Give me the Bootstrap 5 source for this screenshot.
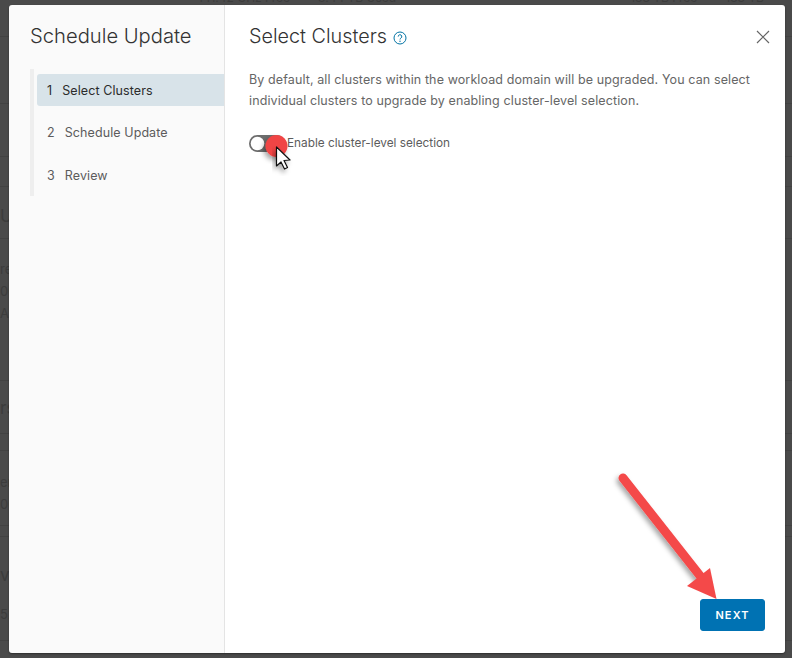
<!DOCTYPE html>
<html lang="en">
<head>
    <meta charset="UTF-8">
    <meta name="viewport" content="width=device-width, initial-scale=1.0">
    <title>Schedule Update</title>
    <link href="https://cdn.jsdelivr.net/npm/bootstrap@5.3.0/dist/css/bootstrap.min.css" rel="stylesheet">
    <style>
        html, body { height: 100%; }
        body { background: #4a4a4a; font-family: Inter, "Liberation Sans", sans-serif; overflow: hidden; }

        /* dimmed page behind the wizard */
        .back-page { height: 658px; color: #3c3c3c; font-size: 13px; line-height: 18px; overflow: hidden; }
        .back-top { height: 47px; margin-top: -11px; padding-left: 198px; gap: 28px; font-size: 12px; white-space: nowrap; }
        .back-top .far-one { margin-left: 206px; }
        .back-row { border-top: 1px solid #424242; display: flex; flex-direction: column; }
        .back-row span { white-space: nowrap; }
        .back-big { font-size: 17px; }

        /* wizard */
        .wiz-frame { position: absolute; top: 5px; left: 9px; width: 776px; height: 648px; border-radius: 3px; overflow: hidden; box-shadow: 0 1px 2px rgba(0,0,0,.4); }
        .wiz-side { width: 216px; flex: none; background: #fafafa; border-right: 1px solid #e4e4e4; padding: 20px 0 0 21px; }
        .wiz-title { font-size: 20.2px; font-weight: 300; line-height: 22px; color: #333; margin: 0 0 22px; }
        .wiz-steps { border-left: 4px solid #eeeeee; padding: 5px 0 0 3px; height: 127px; gap: 10.5px; }
        .wiz-step { height: 32px; padding: 2px 0 0 10px; font-size: 12.5px; letter-spacing: .09px; color: #5c5c5c; display: flex; align-items: center; gap: 10px; border-radius: 3px 0 0 3px; }
        .wiz-step.on { background: #d8e3e9; color: #2b2b2b; }
        .wiz-main { padding: 20px 20px 0 24px; position: relative; background: #fff; min-width: 0; }
        .wiz-head { font-size: 19.8px; font-weight: 300; line-height: 22px; color: #333; margin: 0; }
        .wiz-help { margin-left: 6px; margin-top: 3px; }
        .wiz-close { background: none; border: 0; padding: 0; line-height: 0; margin-right: -5px; margin-top: 1px; }
        .wiz-text { font-size: 12.5px; letter-spacing: .11px; line-height: 21px; color: #666; margin: 22px 0 0; width: 512px; }
        .wiz-toggle { margin: 24px 0 0; min-height: 0; padding: 0; gap: 2px; }
        .wiz-toggle .form-check-input { float: none; margin: 0; width: 36px; height: 17px; border: 0; background-color: #6d6d6d; box-shadow: none; background-position: left center;
            background-image: url("data:image/svg+xml,%3csvg xmlns='http://www.w3.org/2000/svg' viewBox='-4 -4 8 8'%3e%3ccircle r='3.2' fill='%23fff'/%3e%3c/svg%3e"); }
        .wiz-toggle .form-check-label { font-size: 11.8px; color: #5c5c5c; line-height: 14px; margin-top: -2px; }
        .wiz-next { position: absolute; right: 20px; bottom: 22px; width: 65px; height: 32px; padding: 0; border-radius: 3px; background: #0072b3; border-color: #0072b3; color: #fff; font-size: 11px; font-weight: 600; letter-spacing: 1.1px; }

        /* annotations over the screenshot */
        .note-layer { position: absolute; top: 0; left: 0; width: 792px; height: 658px; pointer-events: none; }
    </style>
</head>
<body>
    <div class="back-page">
        <div class="back-top d-flex">
            <span>141.42 GHz Free</span><span>8.44 TB Used</span><span class="far-one">133 TB Free</span><span>133 TB</span>
        </div>
        <div class="back-row" style="height:67px"></div>
        <div class="back-row" style="height:53px"></div>
        <div class="back-row" style="height:30px"></div>
        <div class="back-row back-big" style="height:52px;padding-top:20px"><span>Up</span></div>
        <div class="back-row" style="height:142px;padding-top:21px"><span>re</span><span class="mt-1">00</span><span class="mt-1">A</span></div>
        <div class="back-row back-big" style="height:53px;padding-top:18px"><span>rs</span></div>
        <div class="back-row" style="height:17px"></div>
        <div class="back-row" style="height:75px;padding-top:22px"><span>er</span><span class="mt-1">00</span></div>
        <div class="back-row" style="height:11px"></div>
        <div class="back-row" style="height:104px;padding-top:29px"><span class="back-big">ve</span><span style="margin-top:21px">52</span></div>
        <div class="back-row"></div>
    </div>

    <div class="wiz-frame d-flex">
        <div class="wiz-side">
            <h2 class="wiz-title">Schedule Update</h2>
            <div class="wiz-steps d-flex flex-column">
                <div class="wiz-step on"><span>1</span><span>Select Clusters</span></div>
                <div class="wiz-step"><span>2</span><span>Schedule Update</span></div>
                <div class="wiz-step"><span>3</span><span>Review</span></div>
            </div>
        </div>
        <div class="wiz-main flex-grow-1">
            <div class="d-flex align-items-center">
                <h3 class="wiz-head">Select Clusters</h3>
                <svg class="wiz-help" width="14" height="14" viewBox="0 0 14 14" fill="none" stroke="#0072a3">
                    <circle cx="7" cy="7" r="6" stroke-width="1"/>
                    <path d="M5.2 5.6a1.8 1.8 0 1 1 2.7 1.5c-.6.4-.9.7-.9 1.4" stroke-width="1"/>
                    <circle cx="7" cy="10.3" r=".7" fill="#0072a3" stroke="none"/>
                </svg>
                <button type="button" class="wiz-close ms-auto" aria-label="Close">
                    <svg width="14" height="14" viewBox="0 0 14 14" stroke="#666" stroke-width="1.2"><path d="M1 1l12 12M13 1L1 13"/></svg>
                </button>
            </div>
            <p class="wiz-text">By default, all clusters within the workload domain will be upgraded. You can select individual clusters to upgrade by enabling cluster-level selection.</p>
            <div class="form-check form-switch wiz-toggle d-flex align-items-center">
                <input class="form-check-input" type="checkbox" role="switch" id="clusterSel">
                <label class="form-check-label" for="clusterSel">Enable cluster-level selection</label>
            </div>
            <button type="button" class="btn btn-primary wiz-next">NEXT</button>
        </div>
    </div>

    <svg class="note-layer" viewBox="0 0 792 658">
        <defs>
            <filter id="soft" x="-30%" y="-30%" width="160%" height="160%">
                <feDropShadow dx="-2" dy="3" stdDeviation="2.5" flood-color="#000" flood-opacity=".35"/>
            </filter>
        </defs>
        <circle cx="276.5" cy="146" r="11" fill="#f04444" filter="url(#soft)"/>
        <path d="M276.5 147v19l4.5-4 3.5 7 3-1.5-3.5-7 6-.5z" fill="#fff" stroke="#111" stroke-width="1.2" stroke-linejoin="round" filter="url(#soft)"/>
        <path d="M623 478L701 577" stroke="#f44949" stroke-width="9" stroke-linecap="round" fill="none" filter="url(#soft)"/>
        <path d="M716.5 599L687 586L710 568z" fill="#f44949"/>
    </svg>

    <script src="https://cdn.jsdelivr.net/npm/bootstrap@5.3.0/dist/js/bootstrap.bundle.min.js"></script>
</body>
</html>
